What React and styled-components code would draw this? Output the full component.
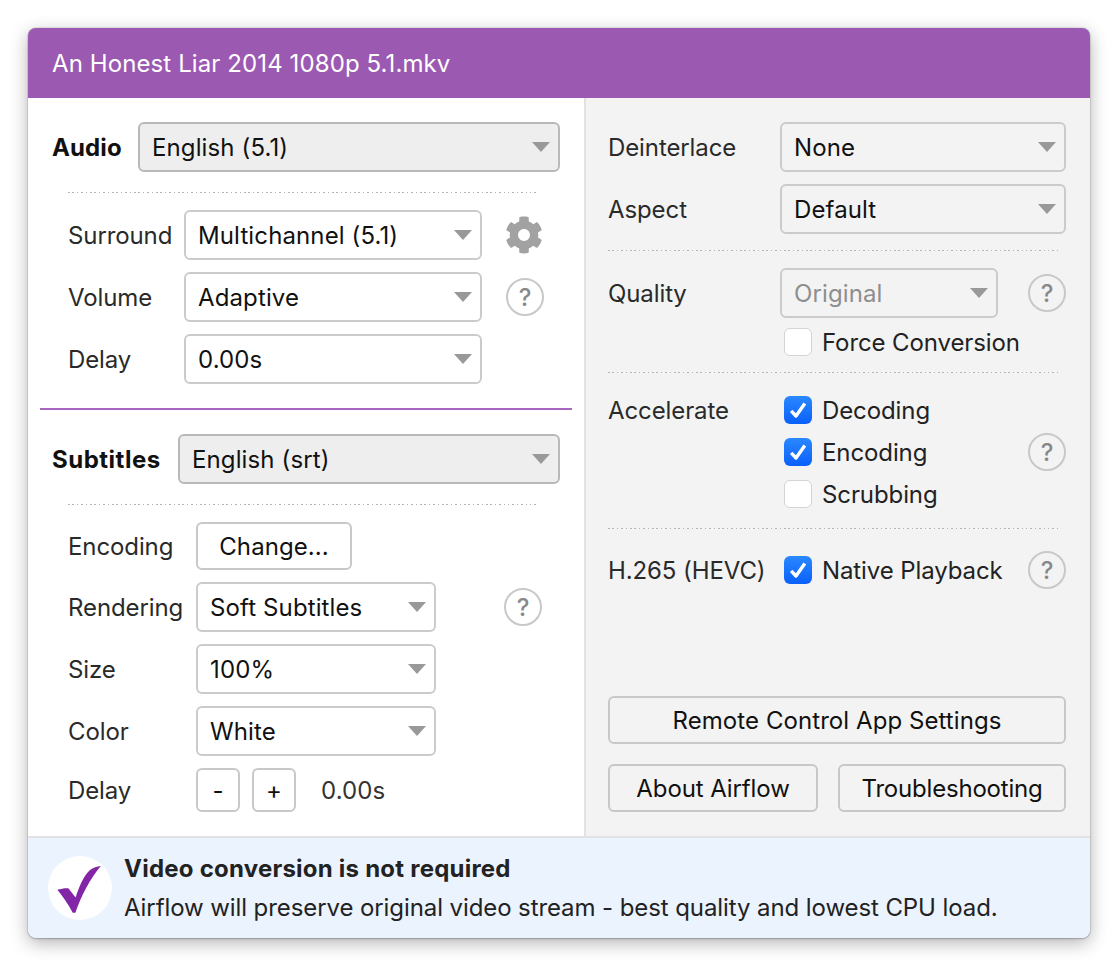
import React from "react";
import styled, { createGlobalStyle } from "styled-components";
import { FaCog } from "react-icons/fa";

const GlobalStyle = createGlobalStyle`
  html, body {
    min-height: 966px;
  }
  body {
    margin: 0;
    background: #fff;
    font-family: Inter, "Liberation Sans", sans-serif;
    color: #222;
  }
  #root {
    height: 966px;
    overflow: hidden;
    padding-top: 1px;
    margin-top: -1px;
  }
`;

// Window frame
const Shadow = styled.div`
  width: 1062px;
  height: 910px;
  margin: 28px 0 0 28px;
  border-radius: 8px;
  box-shadow: 0 0 1px rgba(0, 0, 0, 0.65), 0 1px 2px rgba(0, 0, 0, 0.2), 0 5px 18px rgba(0, 0, 0, 0.3);
`;

const Window = styled.div`
  height: 100%;
  border-radius: 8px;
  overflow: hidden;
`;

const TitleBar = styled.div`
  display: flex;
  align-items: center;
  height: 70px;
  padding-left: 24px;
  background: #9b59b2;
  color: #fff;
  font-size: 24px;
  letter-spacing: 0.1px;
`;

const Main = styled.div`
  display: flex;
  height: 738px;
`;

const LeftPane = styled.div`
  box-sizing: border-box;
  width: 558px;
  padding-top: 24px;
  background: #fff;
  border-right: 2px solid #e2e2e2;
`;

const RightPane = styled.div`
  display: flex;
  flex-direction: column;
  flex: 1;
  box-sizing: border-box;
  padding: 24px 24px 24px 22px;
  background: #f3f3f3;
`;

// Text
const Heading = styled.div`
  flex: 0 0 ${(p) => p.$width}px;
  font-size: 24px;
  font-weight: 700;
  letter-spacing: ${(p) => p.$spacing}px;
  color: #111;
`;

const Label = styled.div`
  flex: 0 0 ${(p) => p.$width}px;
  font-size: 24px;
  letter-spacing: -0.1px;
  color: #2a2a2a;
`;

// Rows
const HeadRow = styled.div`
  display: flex;
  align-items: center;
  padding: 0 24px;
`;

const Rows = styled.div`
  display: flex;
  flex-direction: column;
  gap: 12px;
  padding-left: ${(p) => p.$left ?? 40}px;
`;

const Row = styled.div`
  display: flex;
  align-items: center;
  gap: ${(p) => p.$gap || 0}px;
`;

const Dotted = styled.div`
  height: 1px;
  margin: ${(p) => p.$margin};
  background-image: repeating-linear-gradient(90deg, #b4b4b4 0 1.5px, transparent 1.5px 4.4px);
`;

const PurpleLine = styled.div`
  height: 2px;
  margin: 24px 12px 24px;
  background: #a866c0;
`;

// Controls
const SelectBox = styled.div`
  display: flex;
  align-items: center;
  justify-content: space-between;
  box-sizing: border-box;
  flex: ${(p) => (p.$fill ? "1" : "none")};
  width: ${(p) => (p.$width ? `${p.$width}px` : "auto")};
  height: 50px;
  padding: 0 8px 0 12px;
  background: ${(p) => (p.$gray ? "#eeeeee" : p.$clear ? "transparent" : "#fff")};
  border: 2px solid ${(p) => (p.$gray ? "#b9b9b9" : "#cbcbcb")};
  border-radius: 6px;
  font-size: 24px;
  letter-spacing: 0.12px;
  color: ${(p) => (p.$muted ? "#8e8e8e" : "#111")};
`;

const Arrow = styled.span`
  width: 0;
  height: 0;
  border-left: 9px solid transparent;
  border-right: 9px solid transparent;
  border-top: 10px solid #999;
`;

const Select = ({ children, ...rest }) => (
  <SelectBox {...rest}>
    {children}
    <Arrow />
  </SelectBox>
);

const Button = styled.button`
  box-sizing: border-box;
  flex: ${(p) => (p.$grow ? "1" : "none")};
  width: ${(p) => (p.$width ? `${p.$width}px` : "auto")};
  height: ${(p) => p.$height || 48}px;
  padding: 0;
  background: ${(p) => (p.$clear ? "transparent" : "#fff")};
  border: 2px solid #c8c8c8;
  border-radius: 6px;
  font-family: inherit;
  font-size: 24px;
  letter-spacing: ${(p) => p.$spacing ?? 0.07}px;
  color: #111;
`;

const Help = styled.div`
  display: flex;
  align-items: center;
  justify-content: center;
  box-sizing: border-box;
  flex: none;
  width: 38px;
  height: 38px;
  margin-left: ${(p) => p.$left || 0}px;
  border: 2px solid #c8c8c8;
  border-radius: 50%;
  font-size: 24px;
  font-weight: 500;
  color: #888;
`;

const GearWrap = styled.div`
  display: flex;
  margin-left: 23px;
  color: #a2a2a2;
  font-size: 38px;
`;

const CheckRow = styled.div`
  display: flex;
  align-items: center;
  gap: 10px;
  height: 28px;
  font-size: 24px;
  letter-spacing: -0.1px;
  color: #222;
`;

const Box = styled.span`
  display: flex;
  align-items: center;
  justify-content: center;
  box-sizing: border-box;
  width: 28px;
  height: 28px;
  background: ${(p) => (p.$on ? "linear-gradient(#2a88ff, #0a60fb)" : "#fff")};
  border: ${(p) => (p.$on ? "none" : "1px solid #d4d4d4")};
  border-radius: 6px;
`;

const Check = ({ on, children }) => (
  <CheckRow>
    <Box $on={on}>
      {on && (
        <svg width="20" height="20" viewBox="0 0 20 20">
          <path d="M3.2 10.8 L8 16 L16.8 3.6" fill="none" stroke="#fff" strokeWidth="3.4" strokeLinejoin="round" />
        </svg>
      )}
    </Box>
    {children}
  </CheckRow>
);

const SettingRow = styled.div`
  display: flex;
  align-items: center;
`;

const AccelerateLabel = styled(Label)`
  align-self: flex-start;
`;

const CheckList = styled.div`
  display: flex;
  flex-direction: column;
  flex: 1;
  gap: 14px;
  padding-left: 4px;
`;

const QualityBlock = styled.div`
  display: flex;
  flex-direction: column;
  gap: 10px;
`;

const Indented = styled.div`
  padding-left: 176px;
`;

const Buttons = styled.div`
  display: flex;
  flex-direction: column;
  gap: 20px;
  margin-top: auto;
`;

const ButtonRow = styled.div`
  display: flex;
  gap: 20px;
`;

const ValueText = styled.span`
  margin-left: 25px;
  font-size: 24px;
  letter-spacing: 0.1px;
  color: #333;
`;

// Footer
const Footer = styled.div`
  display: flex;
  align-items: center;
  gap: 12px;
  box-sizing: border-box;
  height: 102px;
  padding-left: 20px;
  background: #ebf3fe;
  border-top: 2px solid #e2e2e2;
`;

const Badge = styled.svg`
  flex: none;
  width: 64px;
  height: 64px;
`;

const FooterText = styled.div`
  display: flex;
  flex-direction: column;
  gap: 10px;
  font-size: 24px;
  letter-spacing: -0.09px;
  line-height: 29px;
  color: #222;
`;

const FooterTitle = styled.div`
  font-weight: 700;
  letter-spacing: 0.23px;
`;

export default function App() {
  return (
    <>
      <GlobalStyle />
      <Shadow>
        <Window>
          <TitleBar>An Honest Liar 2014 1080p 5.1.mkv</TitleBar>
          <Main>
            <LeftPane>
              <HeadRow>
                <Heading $width={86} $spacing={0.1}>Audio</Heading>
                <Select $fill $gray>English (5.1)</Select>
              </HeadRow>
              <Dotted $margin="20px 46px 17px 40px" />
              <Rows>
                <Row>
                  <Label $width={116}>Surround</Label>
                  <Select $width={298}>Multichannel (5.1)</Select>
                  <GearWrap>
                    <FaCog />
                  </GearWrap>
                </Row>
                <Row>
                  <Label $width={116}>Volume</Label>
                  <Select $width={298}>Adaptive</Select>
                  <Help $left={24}>?</Help>
                </Row>
                <Row>
                  <Label $width={116}>Delay</Label>
                  <Select $width={298}>0.00s</Select>
                </Row>
              </Rows>
              <PurpleLine />
              <HeadRow>
                <Heading $width={126} $spacing={0.5}>Subtitles</Heading>
                <Select $fill $gray>English (srt)</Select>
              </HeadRow>
              <Dotted $margin="20px 46px 17px 40px" />
              <Rows>
                <Row>
                  <Label $width={128}>Encoding</Label>
                  <Button $width={156}>Change...</Button>
                </Row>
                <Row>
                  <Label $width={128}>Rendering</Label>
                  <Select $width={240}>Soft Subtitles</Select>
                  <Help $left={68}>?</Help>
                </Row>
                <Row>
                  <Label $width={128}>Size</Label>
                  <Select $width={240}>100%</Select>
                </Row>
                <Row>
                  <Label $width={128}>Color</Label>
                  <Select $width={240}>White</Select>
                </Row>
                <Row>
                  <Label $width={128}>Delay</Label>
                  <Row $gap={12}>
                    <Button $width={44} $height={44}>-</Button>
                    <Button $width={44} $height={44}>+</Button>
                  </Row>
                  <ValueText>0.00s</ValueText>
                </Row>
              </Rows>
            </LeftPane>
            <RightPane>
              <Rows $left={0}>
                <SettingRow>
                  <Label $width={172}>Deinterlace</Label>
                  <Select $fill $clear>None</Select>
                </SettingRow>
                <SettingRow>
                  <Label $width={172}>Aspect</Label>
                  <Select $fill $clear>Default</Select>
                </SettingRow>
              </Rows>
              <Dotted $margin="16px 6px 17px 0" />
              <QualityBlock>
                <SettingRow>
                  <Label $width={172}>Quality</Label>
                  <Select $width={218} $clear $muted>Original</Select>
                  <Help $left={30}>?</Help>
                </SettingRow>
                <Indented>
                  <Check>Force Conversion</Check>
                </Indented>
              </QualityBlock>
              <Dotted $margin="16px 6px 23px 0" />
              <SettingRow>
                <AccelerateLabel $width={172}>Accelerate</AccelerateLabel>
                <CheckList>
                  <Check on>Decoding</Check>
                  <Check on>Encoding</Check>
                  <Check>Scrubbing</Check>
                </CheckList>
                <Help>?</Help>
              </SettingRow>
              <Dotted $margin="20px 6px 22px 0" />
              <SettingRow>
                <Label $width={172}>H.265 (HEVC)</Label>
                <CheckList>
                  <Check on>Native Playback</Check>
                </CheckList>
                <Help>?</Help>
              </SettingRow>
              <Buttons>
                <Button $clear>Remote Control App Settings</Button>
                <ButtonRow>
                  <Button $clear $width={210} $spacing={-0.1}>About Airflow</Button>
                  <Button $clear $grow $spacing={-0.2}>Troubleshooting</Button>
                </ButtonRow>
              </Buttons>
            </RightPane>
          </Main>
          <Footer>
            <Badge viewBox="0 0 64 64">
              <circle cx="32" cy="32" r="32" fill="#fff" />
              <path
                d="M9.3 33.8 C13 32.6 17 32 20.3 32.2 L27.6 41.6 C31 31 35.5 20 42 14 C45 11.6 49 10.4 52.8 10 C42 23 33 40 27.4 56.7 L24.7 56.7 C20 48 15 40.5 9.3 33.8 Z"
                fill="#8225a6"
              />
            </Badge>
            <FooterText>
              <FooterTitle>Video conversion is not required</FooterTitle>
              <div>Airflow will preserve original video stream - best quality and lowest CPU load.</div>
            </FooterText>
          </Footer>
        </Window>
      </Shadow>
    </>
  );
}
